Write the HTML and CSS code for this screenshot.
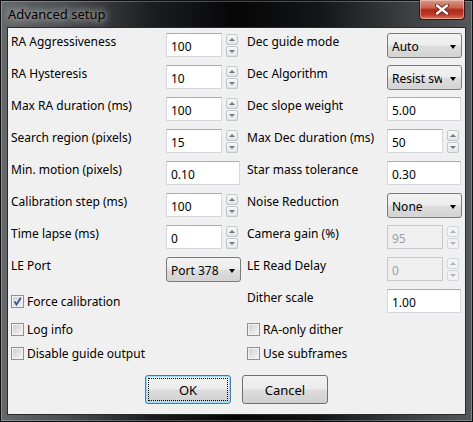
FILE: index.html
```html
<!DOCTYPE html>
<html lang="en">
  <head>
    <meta charset="UTF-8" />
    <title>Advanced setup</title>
    <link rel="stylesheet" href="styles.css">
  </head>

  <body>
    <div class="window">
      <!-- Title bar -->
      <div class="titlebar">
        <span class="title">Advanced setup</span>
        <div class="close">
          <svg width="14" height="11" viewBox="0 0 14 11">
            <path d="M2 1.5 L12 9.5 M12 1.5 L2 9.5" stroke="#5a1a12" stroke-width="4" stroke-linecap="round" />
            <path d="M2 1.5 L12 9.5 M12 1.5 L2 9.5" stroke="#ffffff" stroke-width="2.4" stroke-linecap="round" />
          </svg>
        </div>
      </div>

      <div class="client">
        <div class="form">
          <!-- row 1 -->
          <div class="label">RA Aggressiveness</div>
          <div class="spin">
            <input class="field" value="100" />
            <div class="arrows"><span class="up"></span><span class="down"></span></div>
          </div>
          <div class="label">Dec guide mode</div>
          <div class="combo"><span class="value">Auto</span></div>

          <!-- row 2 -->
          <div class="label">RA Hysteresis</div>
          <div class="spin">
            <input class="field" value="10" />
            <div class="arrows"><span class="up"></span><span class="down"></span></div>
          </div>
          <div class="label">Dec Algorithm</div>
          <div class="combo"><span class="value">Resist switch</span></div>

          <!-- row 3 -->
          <div class="label">Max RA duration (ms)</div>
          <div class="spin">
            <input class="field" value="100" />
            <div class="arrows"><span class="up"></span><span class="down"></span></div>
          </div>
          <div class="label">Dec slope weight</div>
          <input class="field wide" value="5.00" />

          <!-- row 4 -->
          <div class="label">Search region (pixels)</div>
          <div class="spin">
            <input class="field" value="15" />
            <div class="arrows"><span class="up"></span><span class="down"></span></div>
          </div>
          <div class="label">Max Dec duration (ms)</div>
          <div class="spin">
            <input class="field" value="50" />
            <div class="arrows"><span class="up"></span><span class="down"></span></div>
          </div>

          <!-- row 5 -->
          <div class="label">Min. motion (pixels)</div>
          <input class="field wide" value="0.10" />
          <div class="label">Star mass tolerance</div>
          <input class="field wide" value="0.30" />

          <!-- row 6 -->
          <div class="label">Calibration step (ms)</div>
          <div class="spin">
            <input class="field" value="100" />
            <div class="arrows"><span class="up"></span><span class="down"></span></div>
          </div>
          <div class="label">Noise Reduction</div>
          <div class="combo"><span class="value">None</span></div>

          <!-- row 7 -->
          <div class="label">Time lapse (ms)</div>
          <div class="spin">
            <input class="field" value="0" />
            <div class="arrows"><span class="up"></span><span class="down"></span></div>
          </div>
          <div class="label">Camera gain (%)</div>
          <div class="spin off">
            <input class="field" value="95" disabled />
            <div class="arrows"><span class="up"></span><span class="down"></span></div>
          </div>

          <!-- row 8 -->
          <div class="label">LE Port</div>
          <div class="combo"><span class="value">Port 378</span></div>
          <div class="label">LE Read Delay</div>
          <div class="spin off">
            <input class="field" value="0" disabled />
            <div class="arrows"><span class="up"></span><span class="down"></span></div>
          </div>

          <!-- row 9 -->
          <div class="check first">
            <span class="box">
              <svg width="11" height="11" viewBox="0 0 11 11">
                <path d="M2.5 5.5 L4.5 8.5 L8.8 1.8" fill="none" stroke="#3d5a94" stroke-width="1.8" />
              </svg>
            </span>
            Force calibration
          </div>
          <div class="label">Dither scale</div>
          <input class="field wide" value="1.00" />

          <!-- rows 10, 11 -->
          <div class="check"><span class="box"></span>Log info</div>
          <div class="check"><span class="box"></span>RA-only dither</div>
          <div class="check"><span class="box"></span>Disable guide output</div>
          <div class="check"><span class="box"></span>Use subframes</div>
        </div>

        <div class="buttons">
          <button class="btn default">OK</button>
          <button class="btn">Cancel</button>
        </div>
      </div>
    </div>
  </body>
</html>
```

FILE: styles.css
```css
body {
  margin: 0;
  font-family: "Noto Sans", sans-serif;
  font-size: 12px;
  color: #000;
}

/* Window frame (dark glass) */
.window {
  width: 473px;
  height: 422px;
  box-sizing: border-box;
  border: 1px solid #101010;
  box-shadow: inset 0 0 0 1px rgba(255, 255, 255, 0.25);
  background: linear-gradient(
    90deg,
    #66696c 0%,
    #4a4d50 14%,
    #1c1d1f 32%,
    #060607 50%,
    #151617 68%,
    #3c3f42 86%,
    #55585b 100%
  );
  display: flex;
  flex-direction: column;
}

.titlebar {
  height: 27px;
  padding-left: 7px;
  position: relative;
}

.title {
  display: inline-block;
  margin-top: 4px;
  font-size: 13px;
  line-height: 18px;
  text-shadow: 0 0 6px #c8c8c8, 0 0 10px #a0a0a0, 0 0 14px #909090;
}

.close {
  position: absolute;
  top: -1px;
  right: 7px;
  width: 46px;
  height: 20px;
  box-sizing: border-box;
  border: 1px solid #3a1410;
  border-top: none;
  border-radius: 0 0 4px 4px;
  box-shadow: inset 0 0 0 1px rgba(255, 220, 210, 0.45);
  background: linear-gradient(#d99a8c 0%, #c8624f 40%, #b0281a 52%, #be3a28 78%, #dc7a62 100%);
  display: flex;
  align-items: center;
  justify-content: center;
}

/* Dialog body */
.client {
  margin: 0 7px;
  height: 386px;
  background-color: #f0f0f0;
  box-shadow: 0 0 0 1px #2a2a2a;
}

.form {
  display: grid;
  grid-template-columns: 155px 81px 140px 74px;
  grid-template-rows: repeat(9, 32px) repeat(2, 24px);
  padding: 5px 0 0 3px;
}

.label {
  line-height: 18px;
  white-space: nowrap;
}

/* Text boxes */
.field {
  box-sizing: border-box;
  width: 56px;
  height: 24px;
  margin: 0;
  padding: 2px 4px 0;
  border: 1px solid #d5d8dd;
  border-top-color: #abadb3;
  background-color: #fff;
  font: inherit;
  color: #000;
  outline: none;
}

.field.wide {
  width: 74px;
}

.field:disabled {
  background-color: #f0f0f0;
  border-color: #c9cacd;
  color: #a0a0a0;
}

/* Spin control */
.spin {
  display: flex;
  gap: 4px;
}

.arrows {
  display: flex;
  flex-direction: column;
  gap: 1px;
  padding-top: 1px;
}

.arrows span {
  width: 12px;
  height: 11px;
  box-sizing: border-box;
  border: 1px solid #c3c7cd;
  border-radius: 2px;
  background: linear-gradient(#f8f8f8, #e4e4e4);
  display: flex;
  align-items: center;
  justify-content: center;
}

.arrows .up::after,
.arrows .down::after {
  content: "";
  border-left: 3px solid transparent;
  border-right: 3px solid transparent;
}

.arrows .up::after {
  border-bottom: 3px solid #6f7780;
}

.arrows .down::after {
  border-top: 3px solid #6f7780;
}

.spin.off .arrows span {
  border-color: #d4d6d9;
  background: #f2f2f2;
}

.spin.off .arrows .up::after {
  border-bottom-color: #b0b4b8;
}

.spin.off .arrows .down::after {
  border-top-color: #b0b4b8;
}

/* Drop-down list */
.combo {
  box-sizing: border-box;
  width: 75px;
  height: 25px;
  padding: 1px 0 0 4px;
  border: 1px solid #7a7a7a;
  border-radius: 3px;
  background: linear-gradient(#f4f4f4 0%, #ececec 48%, #dedede 52%, #d2d2d2 100%);
  display: flex;
  align-items: center;
}

.combo .value {
  flex: 1;
  overflow: hidden;
  white-space: nowrap;
  margin-right: 8px;
}

.combo::after {
  content: "";
  margin: 1px 5px 0 0;
  border-left: 3.5px solid transparent;
  border-right: 3.5px solid transparent;
  border-top: 4px solid #000;
}

/* Check boxes */
.check {
  grid-column: span 2;
  display: flex;
  align-items: center;
  gap: 3px;
  height: 16px;
  white-space: nowrap;
}

.check.first {
  height: 25px;
}

.box {
  width: 13px;
  height: 13px;
  box-sizing: border-box;
  border: 1px solid #8e8f8f;
  box-shadow: inset 0 0 0 1px #f4f4f4;
  background: linear-gradient(135deg, #cfcfcf, #f6f6f6);
  display: flex;
  align-items: center;
  justify-content: center;
}

/* Buttons */
.buttons {
  display: flex;
  justify-content: center;
  gap: 11px;
  margin-top: 6px;
}

.btn {
  width: 86px;
  height: 29px;
  box-sizing: border-box;
  border: 1px solid #707070;
  border-radius: 3px;
  background: linear-gradient(#f2f2f2 0%, #ebebeb 49%, #dddddd 51%, #cfcfcf 100%);
  font: inherit;
  font-size: 13px;
  color: #000;
  padding: 0;
}

.btn.default {
  border-color: #3c7fb1;
  box-shadow: inset 0 0 0 1px #9fdcf7;
  outline: 1px dotted #000;
  outline-offset: -4px;
}
```
